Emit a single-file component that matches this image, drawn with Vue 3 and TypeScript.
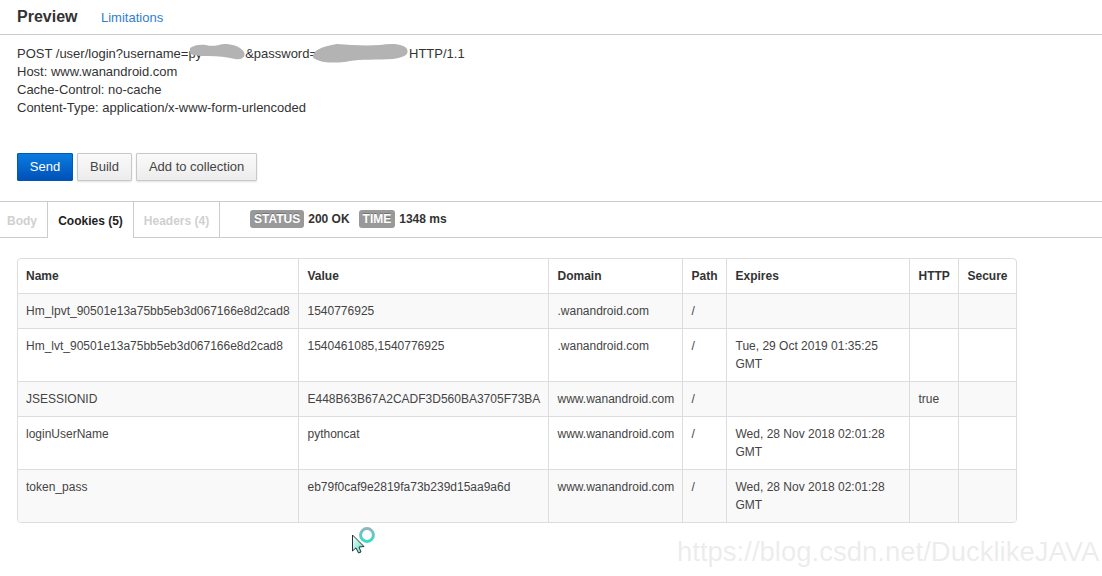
<script setup lang="ts">
interface Cookie { name: string; value: string; domain: string; path: string; expires: string; http: string; secure: string }
const cols: number[] = [280, 250, 134, 44, 183, 49, 58]
const heads: string[] = ['Name', 'Value', 'Domain', 'Path', 'Expires', 'HTTP', 'Secure']
const cookies: Cookie[] = [
  { name: 'Hm_lpvt_90501e13a75bb5eb3d067166e8d2cad8', value: '1540776925', domain: '.wanandroid.com', path: '/', expires: '', http: '', secure: '' },
  { name: 'Hm_lvt_90501e13a75bb5eb3d067166e8d2cad8', value: '1540461085,1540776925', domain: '.wanandroid.com', path: '/', expires: 'Tue, 29 Oct 2019 01:35:25 GMT', http: '', secure: '' },
  { name: 'JSESSIONID', value: 'E448B63B67A2CADF3D560BA3705F73BA', domain: 'www.wanandroid.com', path: '/', expires: '', http: 'true', secure: '' },
  { name: 'loginUserName', value: 'pythoncat', domain: 'www.wanandroid.com', path: '/', expires: 'Wed, 28 Nov 2018 02:01:28 GMT', http: '', secure: '' },
  { name: 'token_pass', value: 'eb79f0caf9e2819fa73b239d15aa9a6d', domain: 'www.wanandroid.com', path: '/', expires: 'Wed, 28 Nov 2018 02:01:28 GMT', http: '', secure: '' },
]
</script>

<template>
  <div class="page">
    <header class="head">
      <h1>Preview</h1>
      <a class="link">Limitations</a>
    </header>

    <section class="request">
      <div class="line">POST /user/login?username=py<span class="gap-a"></span>&amp;password=<span class="gap-b"></span>HTTP/1.1<svg class="blobs" width="240" height="30" viewBox="0 0 240 30"><path d="M10 10C14 7 20 6 26 7C32 9 38 7 44 6C52 6 60 8 64 14C66 19 62 22 55 21C47 19 38 18 28 18C20 18 12 18 10 15Z" /><path d="M133 17C135 11 145 8 157 6C170 7 185 8 200 7C212 5 224 6 227 11C229 16 226 19 213 21C198 22 180 21 170 23C160 25 146 25 140 23C135 21 132 20 133 17Z" /></svg></div>
      <div class="line">Host: www.wanandroid.com</div>
      <div class="line">Cache-Control: no-cache</div>
      <div class="line">Content-Type: application/x-www-form-urlencoded</div>
    </section>

    <div class="actions">
      <button class="btn primary">Send</button>
      <button class="btn">Build</button>
      <button class="btn">Add to collection</button>
    </div>

    <nav class="tabs">
      <span class="tab first muted">Body</span>
      <span class="tab active">Cookies (5)</span>
      <span class="tab muted">Headers (4)</span>
      <div class="meta">
        <span class="badge">STATUS</span><span class="val status">200 OK</span>
        <span class="badge">TIME</span><span class="val">1348 ms</span>
      </div>
    </nav>

    <div class="table-wrap">
      <table>
        <colgroup><col v-for="(w, i) in cols" :key="i" :style="{ width: w + 'px' }" /></colgroup>
        <thead>
          <tr><th v-for="h in heads" :key="h">{{ h }}</th></tr>
        </thead>
        <tbody>
          <tr v-for="c in cookies" :key="c.name">
            <td>{{ c.name }}</td>
            <td>{{ c.value }}</td>
            <td>{{ c.domain }}</td>
            <td>{{ c.path }}</td>
            <td>{{ c.expires }}</td>
            <td>{{ c.http }}</td>
            <td>{{ c.secure }}</td>
          </tr>
        </tbody>
      </table>
    </div>

    <svg class="cursor" width="30" height="32" viewBox="0 0 30 32">
      <defs>
        <linearGradient id="ring" x1="0" y1="0" x2="0" y2="1">
          <stop offset="0" stop-color="#8fb4c4" />
          <stop offset="1" stop-color="#35dcc8" />
        </linearGradient>
        <linearGradient id="arrow" x1="0" y1="0" x2="1" y2="1">
          <stop offset="0" stop-color="#ffffff" />
          <stop offset="1" stop-color="#4fdcb8" />
        </linearGradient>
      </defs>
      <circle cx="21" cy="12" r="6.4" fill="none" stroke="url(#ring)" stroke-width="3" />
      <path d="M6.5 12V28L10 24.8L12.5 30L15 29L13 24L18 23.5Z" fill="url(#arrow)" stroke="#26333f" stroke-width="1" stroke-linejoin="round" />
    </svg>

    <div class="watermark">https://blog.csdn.net/DucklikeJAVA</div>
  </div>
</template>

<style>
html, body { margin: 0; background: #fff; }
</style>

<style scoped>
.page {
  position: relative;
  width: 1102px;
  height: 576px;
  overflow: hidden;
  background: #fff;
  font-family: "Liberation Sans", Arial, sans-serif;
  font-size: 13px;
  color: #333;
  box-sizing: border-box;
}
.head {
  display: flex;
  align-items: center;
  height: 34px;
  padding: 0 0 0 17px;
  border-bottom: 1px solid #ccc;
  box-sizing: content-box;
}
h1 {
  margin: 0;
  font-size: 16px;
  font-weight: bold;
  line-height: 34px;
  color: #333;
  width: 84px;
}
.link { color: #2f80d0; font-size: 13px; }
.request { padding: 10px 0 0 17px; height: 107px; box-sizing: border-box; }
.line { line-height: 18px; white-space: nowrap; position: relative; }
.gap-a { display: inline-block; width: 43px; }
.gap-b { display: inline-block; width: 92px; }
.blobs { position: absolute; left: 163px; top: -7px; fill: #b3b3b3; }
.actions { display: flex; gap: 4px; height: 59px; padding: 11px 0 0 17px; box-sizing: border-box; }
.btn {
  height: 28px;
  padding: 0 12px 2px;
  border: 1px solid #c8c8c8;
  border-radius: 1px;
  background: linear-gradient(#fafafa, #ececec);
  box-shadow: 0 1px 2px rgba(0, 0, 0, 0.12);
  font: 13px "Liberation Sans", Arial, sans-serif;
  color: #444;
}
.primary {
  width: 56px;
  padding: 0 0 2px;
  border-color: #0058b8;
  background: linear-gradient(#0a7ce0, #0050b8);
  color: #fff;
  box-shadow: none;
}
.tabs {
  display: flex;
  align-items: stretch;
  height: 37px;
  border-top: 1px solid #ccc;
  border-bottom: 1px solid #ccc;
  box-sizing: border-box;
  font-size: 12px;
  font-weight: bold;
  margin-bottom: 20px;
}
.tab { display: flex; align-items: center; justify-content: center; box-sizing: border-box; padding: 2px 10px 0; border-right: 1px solid #ccc; margin-bottom: -1px; height: 36px; }
.tab.first { width: 48px; padding: 2px 0 0; padding-right: 3px; }
.muted { color: #d0d0d0; }
.active { width: 86px; padding: 2px 0 0; color: #222; background: #fff; }
.tab.muted:not(.first) { width: 86px; padding: 2px 0 0; }
.meta { display: flex; align-items: flex-start; padding: 8px 0 0 30px; color: #333; }
.badge {
  background: #999;
  color: #fff;
  border-radius: 3px;
  padding: 0 4px;
  line-height: 18px;
  height: 18px;
  text-shadow: 0 -1px 0 rgba(0, 0, 0, 0.25);
}
.val { line-height: 16px; margin: 1px 0 0 4px; }
.status { margin-right: 9px; }
.table-wrap {
  width: 1000px;
  margin-left: 17px;
  border: 1px solid #ddd;
  border-radius: 4px;
  box-sizing: border-box;
  overflow: hidden;
}
table {
  width: 998px;
  table-layout: fixed;
  border-collapse: collapse;
  font-size: 12px;
  color: #444;
}
th, td {
  padding: 8px 8px 8px 9px;
  line-height: 18px;
  text-align: left;
  vertical-align: top;
  border-left: 1px solid #ddd;
  border-top: 1px solid #ddd;
  box-sizing: border-box;
}
th:first-child, td:first-child { border-left: 0; padding-left: 8px; }
thead th { border-top: 0; font-weight: bold; color: #333; }
tbody tr:nth-child(odd) td { background: #f9f9f9; }
.cursor { position: absolute; left: 346px; top: 523px; }
.watermark {
  position: absolute;
  left: 677px;
  top: 532px;
  font-size: 27.5px;
  line-height: 40px;
  color: rgba(190, 190, 190, 0.28);
  white-space: nowrap;
}
</style>
